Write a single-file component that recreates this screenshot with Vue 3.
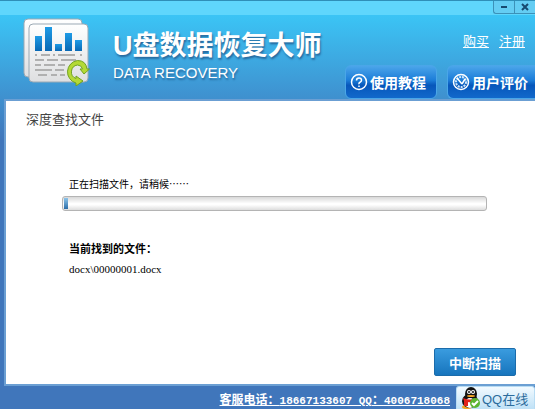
<script setup>
import { ref } from 'vue';

const progress = ref(1);
const foundFile = ref('docx\\00000001.docx');

// Столбцы диаграммы на логотипе: x, верх, высота
const bars = [
  { x: 12, y: 18, h: 15 },
  { x: 22, y: 9, h: 24 },
  { x: 32, y: 26, h: 7 },
  { x: 42, y: 15, h: 18 },
  { x: 52, y: 22, h: 11 },
];
</script>

<template>
  <div class="window">
    <header class="header">
      <div class="title-bar">
        <button class="win-btn" type="button" aria-label="最小化">
          <svg width="8" height="8" viewBox="0 0 8 8"><path d="M1 4h6" stroke="#174a70" stroke-width="2" /></svg>
        </button>
        <button class="win-btn" type="button" aria-label="关闭">
          <svg width="8" height="8" viewBox="0 0 8 8"><path d="M1 1l6 6M7 1L1 7" stroke="#174a70" stroke-width="2" /></svg>
        </button>
      </div>
      <div class="header-body">
        <svg class="logo" width="68" height="68" viewBox="0 0 68 68">
          <defs>
            <linearGradient id="paper" x1="0" y1="0" x2="0" y2="1">
              <stop offset="0" stop-color="#fff" />
              <stop offset="1" stop-color="#dedfe1" />
            </linearGradient>
            <linearGradient id="bar" x1="0" y1="0" x2="0" y2="1">
              <stop offset="0" stop-color="#1f9be6" />
              <stop offset="1" stop-color="#0868b5" />
            </linearGradient>
          </defs>
          <rect x="1" y="1" width="58" height="58" rx="4" fill="url(#paper)" stroke="#9ba9b4" />
          <rect x="6" y="6" width="59" height="58" rx="4" fill="url(#paper)" stroke="#9ba9b4" />
          <rect v-for="bar in bars" :key="bar.x" :x="bar.x" :y="bar.y" width="7" :height="bar.h" fill="url(#bar)" />
          <g fill="none" stroke="#b0b0b0" stroke-width="2">
            <path d="M12 37h2M18 37h9M30 37h2M35 37h17M57 37h2" />
            <path d="M12 42h9M24 42h11M38 42h15" />
            <path d="M12 47h6M21 47h11M35 47h7" />
            <path d="M12 52h17M32 52h9" />
            <path d="M15 57h9M28 57h6M37 57h5" />
          </g>
          <!-- Стрелка восстановления -->
          <path
            d="M61 56l-4-5h2.500q-1-4-5-4a7 7 0 0 0-1.500 13.500v-2.500l7 5-7 5v-3a11.500 11.500 0 0 1 1.500-22.500q8.500 0 9.500 8.500h2.500z"
            fill="#b4d935"
            stroke="#71a31f"
            stroke-linejoin="round"
          />
        </svg>
        <div class="brand">
          <h1>U盘数据恢复大师</h1>
          <p>DATA RECOVERY</p>
        </div>
        <div class="actions">
          <nav class="links">
            <a href="#">购买</a>
            <a href="#">注册</a>
          </nav>
          <div class="tabs">
            <button class="tab" type="button">
              <svg width="18" height="18" viewBox="0 0 18 18" fill="none" stroke="#fff">
                <circle cx="9" cy="9" r="7.500" stroke-width="1.500" />
                <path d="M6.500 7.500q0-2.500 2.500-2.500t2.500 2.200q0 1.300-1.500 2t-1 2M9 12.500v1.500" stroke-width="1.500" />
              </svg>
              使用教程
            </button>
            <button class="tab" type="button">
              <svg width="18" height="18" viewBox="0 0 18 18" fill="none" stroke="#fff">
                <circle cx="9" cy="9" r="7.500" stroke-width="1.500" />
                <circle cx="9" cy="9" r="5" stroke="#cfe6fb" stroke-width="2" stroke-dasharray="2 1" />
                <path d="M5 5l5 6M10 11l3-5" stroke-width="1.500" />
              </svg>
              用户评价
            </button>
          </div>
        </div>
      </div>
    </header>

    <main class="content">
      <h2>深度查找文件</h2>
      <section class="scan">
        <label class="status" for="scan-progress">正在扫描文件，请稍候……</label>
        <progress id="scan-progress" :value="progress" max="100"></progress>
        <h3>当前找到的文件：</h3>
        <p class="file">{{ foundFile }}</p>
      </section>
      <button class="stop" type="button">中断扫描</button>
    </main>

    <footer class="footer">
      <a class="phone" href="#">客服电话：<span>18667133607 QQ</span>：<span>4006718068</span></a>
      <button class="qq" type="button">
        <svg width="20" height="22" viewBox="0 0 20 22">
          <ellipse cx="6" cy="20" rx="5" ry="2" fill="#f5a623" />
          <ellipse cx="9" cy="14" rx="8" ry="7" fill="#111" />
          <ellipse cx="10" cy="7" rx="6" ry="7" fill="#111" />
          <ellipse cx="9" cy="16" rx="5" ry="5" fill="#fff" />
          <ellipse cx="8" cy="5" rx="2" ry="2" fill="#fff" />
          <ellipse cx="12" cy="5" rx="2" ry="2" fill="#fff" />
          <circle cx="8" cy="5" r="1" fill="#111" />
          <circle cx="12" cy="5" r="1" fill="#111" />
          <ellipse cx="10" cy="9" rx="4" ry="1" fill="#f5a623" />
          <path d="M2 11q7 3 14 0v3q-7 2-9 1v4H3v-5z" fill="#e2231a" />
          <circle cx="14" cy="16" r="5" fill="#5cb531" />
          <path d="M11 16l2 2 4-4" fill="none" stroke="#fff" stroke-width="2" />
        </svg>
        QQ在线
      </button>
    </footer>
  </div>
</template>

<style>
body {
  margin: 0;
}
</style>

<style scoped>
.window {
  display: flex;
  flex-direction: column;
  min-height: 100vh;
  overflow: hidden;
  background: linear-gradient(#3bc4f5 16px, #3f8fce 100px, #4076bb 140px);
  font-family: "Liberation Sans", "Noto Sans CJK SC", sans-serif;
}

h1,
h2,
h3,
p {
  margin: 0;
}

button {
  font-family: inherit;
  padding: 0;
  white-space: nowrap;
}

.title-bar {
  display: flex;
  justify-content: flex-end;
  height: 15px;
  box-sizing: border-box;
  border-top: 1px solid #2f8fb8;
  background: #5fd6fc;
}

.win-btn {
  display: flex;
  align-items: center;
  justify-content: center;
  box-sizing: border-box;
  width: 21px;
  height: 13px;
  border: 1px solid #3c91b8;
  border-top: 0;
  border-right: 0;
  background: #64cdf3;
}

.win-btn:first-child {
  border-bottom-left-radius: 3px;
}

.header-body {
  display: flex;
  height: 84px;
  padding-left: 23px;
}

.logo {
  flex: none;
  margin-top: 3px;
}

.brand {
  flex: 1;
  margin: 13px 0 0 22px;
  color: #fff;
  white-space: nowrap;
  text-shadow: 1px 2px 2px #26699e;
}

.brand h1 {
  font-size: 27px;
  line-height: 36px;
}

.brand p {
  font-size: 15px;
  line-height: 18px;
}

.actions {
  display: flex;
  flex-direction: column;
  justify-content: space-between;
}

.links {
  display: flex;
  justify-content: flex-end;
  gap: 10px;
  padding: 18px 10px 0 0;
}

.links a {
  color: #fff;
  font-size: 13px;
  line-height: 18px;
}

.tabs {
  display: flex;
  gap: 10px;
}

.tab {
  display: flex;
  align-items: center;
  gap: 2px;
  box-sizing: border-box;
  height: 34px;
  width: 92px;
  padding-left: 4px;
  border: 1px solid #4aa6e8;
  border-radius: 6px;
  background: linear-gradient(#4ba5ea, #1b7cd8 45%, #0757bb 60%, #1269cb);
  color: #fff;
  font-size: 14px;
  font-weight: bold;
}

.tab:last-child {
  width: 88px;
  border-right: 0;
  border-radius: 6px 0 0 6px;
}

.content {
  flex: 1;
  display: flex;
  flex-direction: column;
  margin-left: 4px;
  padding: 9px 19px 8px 20px;
  border: 2px solid #6b9fd3;
  border-right: 0;
  background: #fff;
}

.content h2 {
  color: #444;
  font-size: 13px;
  font-weight: normal;
  line-height: 20px;
}

.scan {
  display: flex;
  flex-direction: column;
  flex: 1;
  padding: 46px 29px 0 36px;
}

.status {
  padding-left: 7px;
  font-family: "Noto Sans CJK SC", sans-serif;
  font-size: 10px;
  line-height: 16px;
}

progress {
  appearance: none;
  display: block;
  box-sizing: border-box;
  width: 100%;
  height: 15px;
  margin-top: 4px;
  padding: 1px;
  border: 1px solid #b4b4b4;
  border-radius: 3px;
  background: linear-gradient(#d8d8d8, #fff 50%, #fff 60%, #ddd);
}

progress::-webkit-progress-bar {
  background: transparent;
}

progress::-webkit-progress-value {
  background: linear-gradient(#8cc4ea, #2b6da8);
}

.scan h3 {
  margin-top: 30px;
  padding-left: 7px;
  font-size: 11px;
  line-height: 16px;
}

.file {
  margin-top: 4px;
  padding-left: 7px;
  font-family: "Liberation Serif", serif;
  font-size: 11px;
  line-height: 16px;
}

.stop {
  align-self: flex-end;
  width: 82px;
  height: 28px;
  border: 1px solid #1b6cab;
  border-radius: 2px;
  background: linear-gradient(#3a9cdf, #1775bd);
  color: #fff;
  font-size: 13px;
  font-weight: bold;
}

.footer {
  display: flex;
  justify-content: flex-end;
  gap: 6px;
  height: 23px;
}

.phone {
  color: #fff;
  font-size: 12px;
  font-weight: bold;
  line-height: 28px;
  white-space: nowrap;
}

.phone span {
  font-family: "Liberation Mono", monospace;
  font-size: 11px;
}

.qq {
  display: flex;
  align-items: center;
  gap: 1px;
  box-sizing: border-box;
  width: 79px;
  padding-left: 4px;
  border: 1px solid #b8dcf3;
  border-bottom: 0;
  border-radius: 3px 3px 0 0;
  background: linear-gradient(#f2faff, #bfe1f6);
  color: #2c6c9c;
  font-size: 13px;
}
</style>
